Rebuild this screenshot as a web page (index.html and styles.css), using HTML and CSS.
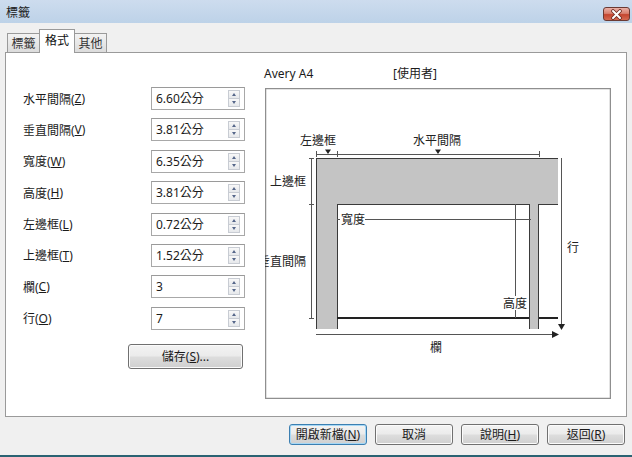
FILE: index.html
```html
<!DOCTYPE html>
<html lang="zh-Hant">
<head>
<meta charset="utf-8">
<title>標籤</title>
<link rel="stylesheet" href="styles.css">
</head>
<body>
<div class="window">
  <div class="titlebar">
    <span class="title">標籤</span>
    <button class="close" aria-label="關閉">
      <svg width="13" height="11" viewBox="0 0 13 11"><path d="M3 2 L10 9 M10 2 L3 9" stroke="#6b2a22" stroke-width="3.6" stroke-linecap="round"/><path d="M3 2 L10 9 M10 2 L3 9" stroke="#fff" stroke-width="2" stroke-linecap="round"/></svg>
    </button>
  </div>
  <div class="body">
    <div class="tabs">
      <div class="tab">標籤</div>
      <div class="tab active">格式</div>
      <div class="tab">其他</div>
    </div>
    <div class="panel">
      <div class="form">
        <div class="fields">
          <label class="lbl">水平間隔(<u>Z</u>)</label>
          <div class="spin"><span class="val">6.60公分</span><span class="arrows"><i class="up"></i><i class="down"></i></span></div>
          <label class="lbl">垂直間隔(<u>V</u>)</label>
          <div class="spin"><span class="val">3.81公分</span><span class="arrows"><i class="up"></i><i class="down"></i></span></div>
          <label class="lbl">寬度(<u>W</u>)</label>
          <div class="spin"><span class="val">6.35公分</span><span class="arrows"><i class="up"></i><i class="down"></i></span></div>
          <label class="lbl">高度(<u>H</u>)</label>
          <div class="spin"><span class="val">3.81公分</span><span class="arrows"><i class="up"></i><i class="down"></i></span></div>
          <label class="lbl">左邊框(<u>L</u>)</label>
          <div class="spin"><span class="val">0.72公分</span><span class="arrows"><i class="up"></i><i class="down"></i></span></div>
          <label class="lbl">上邊框(<u>T</u>)</label>
          <div class="spin"><span class="val">1.52公分</span><span class="arrows"><i class="up"></i><i class="down"></i></span></div>
          <label class="lbl">欄(<u>C</u>)</label>
          <div class="spin"><span class="val">3</span><span class="arrows"><i class="up"></i><i class="down"></i></span></div>
          <label class="lbl">行(<u>O</u>)</label>
          <div class="spin"><span class="val">7</span><span class="arrows"><i class="up"></i><i class="down"></i></span></div>
        </div>
        <button class="btn save">儲存(<u>S</u>)...</button>
      </div>
      <div class="preview">
        <div class="preview-head"><span class="model">Avery A4</span><span>[使用者]</span></div>
        <div class="diagram-box">
          <svg class="diagram" width="346" height="311" viewBox="265 88 346 311">
            <rect x="265.5" y="88.5" width="345" height="310" fill="#fff" stroke="#8f8f8f" stroke-width="1.5"/>
            <path d="M316 158 H558 V204 H539 V329 H529 V204 H337 V329 H316 Z" fill="#c4c4c4"/>
            <g stroke="#3a3a3a" stroke-width="1" fill="none">
              <path d="M316 158.5 H558"/>
              <path d="M316.5 158 V329"/>
              <path d="M337.5 204 V329"/>
              <path d="M337 204.5 H529"/>
              <path d="M529.5 204 V329"/>
              <path d="M538.5 204 V329"/>
              <path d="M539 204.5 H558"/>
            </g>
            <g stroke="#222" stroke-width="2">
              <path d="M337 318 H529"/>
              <path d="M539 318 H558"/>
            </g>
            <g stroke="#555" stroke-width="1" fill="none">
              <path d="M311.5 158 V319"/>
              <path d="M309 158.5 H314 M309 204.5 H314 M309 318.5 H314"/>
              <path d="M316 154.5 H539"/>
              <path d="M316.5 151 V157 M337.5 151 V157 M539.5 151 V157"/>
              <path d="M561.5 158 V325"/>
              <path d="M316 334.5 H553"/>
              <path d="M337 219.5 H531"/>
              <path d="M515.5 204 V318"/>
            </g>
            <g fill="#222">
              <path d="M325 149.5 H331 L328 154 Z"/>
              <path d="M435 149.5 H441 L438 154 Z"/>
              <path d="M558 324 H565 L561.5 330 Z"/>
              <path d="M552 331 V338 L559 334.5 Z"/>
            </g>
            <rect x="340" y="212" width="25" height="14" fill="#fff"/>
            <rect x="502" y="296" width="26" height="14" fill="#fff"/>
            <g class="dtext">
              <text x="318" y="144.5" text-anchor="middle">左邊框</text>
              <text x="437" y="144.5" text-anchor="middle">水平間隔</text>
              <text x="306" y="186" text-anchor="end">上邊框</text>
              <text x="306" y="265.5" text-anchor="end">垂直間隔</text>
              <text x="567" y="251.5">行</text>
              <text x="436" y="351.5" text-anchor="middle">欄</text>
              <text x="341" y="223.5">寬度</text>
              <text x="503" y="307.5">高度</text>
            </g>
          </svg>
        </div>
      </div>
    </div>
    <div class="buttons">
      <button class="btn default">開啟新檔(<u>N</u>)</button>
      <button class="btn">取消</button>
      <button class="btn">說明(<u>H</u>)</button>
      <button class="btn">返回(<u>R</u>)</button>
    </div>
  </div>
</div>
</body>
</html>
```
FILE: styles.css
```css
html, body {
  margin: 0;
  padding: 0;
}
body {
  font-family: "Noto Sans", "Noto Sans CJK TC", sans-serif;
  font-size: 12px;
  color: #1b1b1b;
  background: #f0f0f0;
}
.window {
  width: 632px;
  height: 457px;
  box-sizing: border-box;
  display: flex;
  flex-direction: column;
  background: #f0f0f0;
  border-bottom: 2px solid #2a6373;
}
.titlebar {
  height: 23px;
  flex: none;
  display: flex;
  align-items: flex-start;
  justify-content: space-between;
  padding: 0 2px 0 6px;
  background: linear-gradient(#cddcee, #bdd2e8);
}
.title {
  line-height: 23px;
  font-family: "Noto Sans CJK TC", sans-serif;
}
.close {
  margin-top: 7px;
  width: 27px;
  height: 14px;
  padding: 0;
  border: 1px solid #6b3a33;
  border-radius: 3px;
  background: linear-gradient(#eab0a6 0%, #d9806f 45%, #c4452f 55%, #d56a52 100%);
  display: flex;
  align-items: center;
  justify-content: center;
}
.body {
  flex: 1;
  display: flex;
  flex-direction: column;
  padding: 6px 5px 0 5px;
}
.tabs {
  height: 23px;
  display: flex;
  align-items: flex-end;
  padding-left: 2px;
  position: relative;
  z-index: 1;
}
.tab {
  width: 33px;
  height: 19px;
  box-sizing: border-box;
  border: 1px solid #9a9a9a;
  border-bottom: none;
  background: linear-gradient(#f3f3f3, #dcdcdc);
  text-align: center;
  line-height: 18px;
  font-family: "Noto Sans CJK TC", sans-serif;
  color: #333;
}
.tab + .tab {
  margin-left: -1px;
}
.tab.active {
  width: 36px;
  height: 24px;
  margin-bottom: -1px;
  padding-top: 1px;
  background: #fff;
  color: #111;
  position: relative;
  z-index: 2;
}
.panel {
  height: 365px;
  box-sizing: border-box;
  border: 1px solid #9a9a9a;
  background: #fff;
  display: flex;
  align-items: flex-start;
  padding-left: 17px;
}
.form {
  width: 223px;
  margin-top: 34px;
  display: flex;
  flex-direction: column;
}
.fields {
  display: grid;
  grid-template-columns: 128px 94px;
  grid-auto-rows: 23px;
  row-gap: 8.4px;
}
.lbl {
  display: flex;
  align-items: center;
  white-space: nowrap;
}
.spin {
  box-sizing: border-box;
  border: 1px solid #a8a8a8;
  border-top-color: #9a9a9a;
  background: #fff;
  display: flex;
  align-items: center;
  justify-content: space-between;
  padding: 0 4px 0 4px;
}
.val {
  line-height: 21px;
}
.arrows {
  width: 12px;
  height: 17px;
  display: flex;
  flex-direction: column;
}
.arrows i {
  flex: 1;
  box-sizing: border-box;
  border: 1px solid #c8ccd3;
  background: linear-gradient(#f8f8f8, #e6e8eb);
  display: flex;
  align-items: center;
  justify-content: center;
}
.arrows i + i {
  border-top: none;
}
.arrows i::after {
  content: "";
  width: 0;
  height: 0;
  border-left: 2.5px solid transparent;
  border-right: 2.5px solid transparent;
}
.arrows .up::after {
  border-bottom: 3px solid #56678a;
}
.arrows .down::after {
  border-top: 3px solid #56678a;
}
.btn {
  height: 21px;
  width: 78px;
  padding: 0;
  box-sizing: border-box;
  border: 1px solid #707070;
  border-radius: 3px;
  background: linear-gradient(#f3f3f3 0%, #ebebeb 48%, #dddddd 52%, #cfcfcf 100%);
  box-shadow: inset 0 0 0 1px #fbfbfb;
  font-family: "Noto Sans", "Noto Sans CJK TC", sans-serif;
  font-size: 12px;
  color: #1b1b1b;
  line-height: 19px;
}
.btn.default {
  border-color: #3c7fb1;
  box-shadow: inset 0 0 0 1px #a6d8f6;
}
.save {
  width: 115px;
  height: 25px;
  margin-top: 14px;
  margin-left: 105px;
}
.preview {
  margin-left: 18px;
  margin-top: 13px;
  display: flex;
  flex-direction: column;
}
.preview-head {
  height: 16px;
  line-height: 16px;
  display: flex;
}
.model {
  width: 129px;
}
.diagram-box {
  margin-top: 6px;
  margin-left: 1px;
  width: 346px;
  height: 311px;
}
.diagram {
  display: block;
  overflow: hidden;
}
.dtext text {
  font-family: "Noto Sans CJK TC", sans-serif;
  font-size: 12px;
  fill: #222;
}
.buttons {
  display: flex;
  justify-content: flex-end;
  gap: 8px;
  margin-top: 7px;
  padding-right: 2px;
}
```
